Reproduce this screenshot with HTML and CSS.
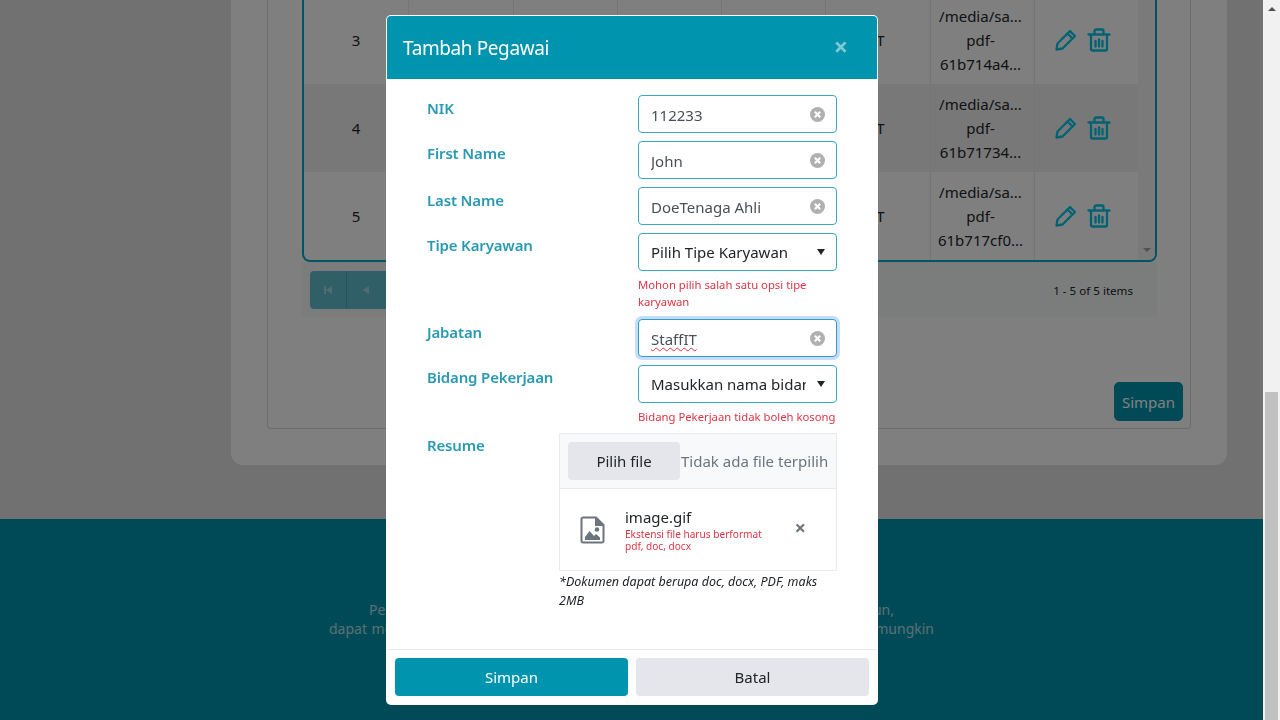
FILE: index.html
```html
<!DOCTYPE html>
<html lang="id">
<head>
<meta charset="utf-8">
<title>Tambah Pegawai</title>
<link rel="stylesheet" href="styles.css">
</head>
<body>
<div class="viewport">
  <main class="page">
    <section class="card">
      <div class="inner">
        <div class="table-box">
          <div class="table">
            <div class="row">
              <div class="cell c-no">3</div><div class="cell"></div><div class="cell"></div><div class="cell"></div><div class="cell"></div><div class="cell">IT</div>
              <div class="cell c-file">/media/sa...<br>pdf-<br>61b714a4...</div>
              <div class="cell c-act">
                <svg class="ic" viewBox="0 0 24 24"><path d="M2.500 21.500 3.500 15.500 16 3l5 5L8.500 20.500Z"/><path d="M13.500 5.500l5 5"/></svg>
                <svg class="ic" viewBox="0 0 24 24"><path d="M1.500 6.500h21M4 6.500V21a1.500 1.500 0 0 0 1.500 1.500h13A1.500 1.500 0 0 0 20 21V6.500M7.500 6.500V3a1.500 1.500 0 0 1 1.500-1.500h6A1.500 1.500 0 0 1 16.500 3v3.500M8.500 13v5.500M12 11.500v7M15.500 13v5.500"/></svg>
              </div>
            </div>
            <div class="row alt">
              <div class="cell c-no">4</div><div class="cell"></div><div class="cell"></div><div class="cell"></div><div class="cell"></div><div class="cell">IT</div>
              <div class="cell c-file">/media/sa...<br>pdf-<br>61b71734...</div>
              <div class="cell c-act">
                <svg class="ic" viewBox="0 0 24 24"><path d="M2.500 21.500 3.500 15.500 16 3l5 5L8.500 20.500Z"/><path d="M13.500 5.500l5 5"/></svg>
                <svg class="ic" viewBox="0 0 24 24"><path d="M1.500 6.500h21M4 6.500V21a1.500 1.500 0 0 0 1.500 1.500h13A1.500 1.500 0 0 0 20 21V6.500M7.500 6.500V3a1.500 1.500 0 0 1 1.500-1.500h6A1.500 1.500 0 0 1 16.500 3v3.500M8.500 13v5.500M12 11.500v7M15.500 13v5.500"/></svg>
              </div>
            </div>
            <div class="row">
              <div class="cell c-no">5</div><div class="cell"></div><div class="cell"></div><div class="cell"></div><div class="cell"></div><div class="cell">IT</div>
              <div class="cell c-file">/media/sa...<br>pdf-<br>61b717cf0...</div>
              <div class="cell c-act">
                <svg class="ic" viewBox="0 0 24 24"><path d="M2.500 21.500 3.500 15.500 16 3l5 5L8.500 20.500Z"/><path d="M13.500 5.500l5 5"/></svg>
                <svg class="ic" viewBox="0 0 24 24"><path d="M1.500 6.500h21M4 6.500V21a1.500 1.500 0 0 0 1.500 1.500h13A1.500 1.500 0 0 0 20 21V6.500M7.500 6.500V3a1.500 1.500 0 0 1 1.500-1.500h6A1.500 1.500 0 0 1 16.500 3v3.500M8.500 13v5.500M12 11.500v7M15.500 13v5.500"/></svg>
              </div>
            </div>
          </div>
          <div class="table-scroll"><span class="arrow-down"></span></div>
        </div>
        <div class="pager">
          <div class="pager-btns">
            <button class="pg-btn first" type="button"><svg class="pg-ic" viewBox="0 0 10 10"><path d="M1 1h2v8H1zM9 1v8L3 5z"/></svg></button>
            <button class="pg-btn" type="button"><svg class="pg-ic" viewBox="0 0 10 10"><path d="M8 1v8L2 5z"/></svg></button>
          </div>
          <span class="pager-info">1 - 5 of 5 items</span>
        </div>
        <div class="save-row"><button class="save" type="button">Simpan</button></div>
      </div>
    </section>
    <footer class="site-footer">
      <p class="foot-line l1">Perusahaan kami membuka lowongan bagi para kandidat terbaik setiap tahun,</p>
      <p class="foot-line l2">dapat mengirim dokumen lamaran dan riwayat hidup anda kepada kami secepat mungkin</p>
    </footer>
    <div class="backdrop"></div>
  </main>
  <aside class="scrollbar"><span class="arrow-up"></span><span class="thumb"></span></aside>
</div>

<div class="modal">
  <header class="modal-head">
    <h1 class="modal-title">Tambah Pegawai</h1>
    <span class="close">&times;</span>
  </header>
  <form class="modal-body">
    <div class="frow">
      <label class="flabel">NIK</label>
      <div class="field"><input class="finput" value="112233">
        <svg class="clear" viewBox="0 0 14 14"><circle cx="7" cy="7" r="7"/><path d="M4.500 4.500l5 5M9.500 4.500l-5 5"/></svg></div>
    </div>
    <div class="frow">
      <label class="flabel up">First Name</label>
      <div class="field"><input class="finput" value="John">
        <svg class="clear" viewBox="0 0 14 14"><circle cx="7" cy="7" r="7"/><path d="M4.500 4.500l5 5M9.500 4.500l-5 5"/></svg></div>
    </div>
    <div class="frow">
      <label class="flabel">Last Name</label>
      <div class="field"><input class="finput" value="DoeTenaga Ahli">
        <svg class="clear" viewBox="0 0 14 14"><circle cx="7" cy="7" r="7"/><path d="M4.500 4.500l5 5M9.500 4.500l-5 5"/></svg></div>
    </div>
    <div class="frow">
      <label class="flabel up">Tipe Karyawan</label>
      <div>
        <div class="field"><select class="fselect"><option>Pilih Tipe Karyawan</option></select><span class="caret"></span></div>
        <p class="err e-two">Mohon pilih salah satu opsi tipe karyawan</p>
      </div>
    </div>
    <div class="frow">
      <label class="flabel">Jabatan</label>
      <div class="field focus"><div class="spell" role="textbox" contenteditable="true" spellcheck="false">StaffIT</div>
        <svg class="clear" viewBox="0 0 14 14"><circle cx="7" cy="7" r="7"/><path d="M4.500 4.500l5 5M9.500 4.500l-5 5"/></svg></div>
    </div>
    <div class="frow">
      <label class="flabel up">Bidang Pekerjaan</label>
      <div>
        <div class="field"><select class="fselect"><option>Masukkan nama bidang pekerjaan</option></select><span class="caret"></span></div>
        <p class="err e-one">Bidang Pekerjaan tidak boleh kosong</p>
      </div>
    </div>
    <div class="frow wide">
      <label class="flabel up">Resume</label>
      <div>
        <div class="upload">
          <div class="up-head">
            <button class="pick" type="button">Pilih file</button>
            <span class="nofile">Tidak ada file terpilih</span>
          </div>
          <div class="up-item">
            <svg class="file-ic" viewBox="0 0 25 28"><path class="fo" d="M1.500 3a1.500 1.500 0 0 1 1.500-1.500h13l7.500 7.500v16a1.500 1.500 0 0 1-1.500 1.500H3A1.500 1.500 0 0 1 1.500 25Z"/><path class="ff" d="M15 1.500h1.500L23.500 9v1H15Z"/><circle class="ff" cx="17" cy="13.500" r="2.300"/><path class="ff" d="M5 24v-3l4.500-6 4.500 5 2-2 4 3.500V24Z"/></svg>
            <div class="up-text">
              <div class="up-name">image.gif</div>
              <div class="up-err">Ekstensi file harus berformat<br>pdf, doc, docx</div>
            </div>
            <span class="up-x">&times;</span>
          </div>
        </div>
        <p class="note">*Dokumen dapat berupa doc, docx, PDF, maks 2MB</p>
      </div>
    </div>
  </form>
  <footer class="modal-foot">
    <button class="mbtn primary" type="button">Simpan</button>
    <button class="mbtn muted" type="button">Batal</button>
  </footer>
</div>
</body>
</html>
```
FILE: styles.css
```css
* { box-sizing: border-box; }
html, body { margin: 0; padding: 0; height: 100%; overflow: hidden; }
body { font-family: "Noto Sans", "Open Sans", sans-serif; color: #212529; background: #e2e2e2; }

.viewport { display: flex; width: 1280px; height: 720px; }
.page { position: relative; width: 1263px; height: 720px; overflow: hidden; background: #e2e2e2; display: flex; flex-direction: column; }
.backdrop { position: absolute; inset: 0; background: rgba(0, 0, 0, .5); }

.scrollbar { width: 17px; background: #f1f1f1; display: flex; flex-direction: column; align-items: center; padding-top: 7px; }
.arrow-up { width: 0; height: 0; border: 4px solid transparent; border-top: 0; border-bottom: 4px solid #505050; }
.thumb { width: 13px; height: 328px; margin-top: 381px; background: #c1c1c1; }

.card { width: 996px; height: 469px; margin: -4px 0 54px 231px; padding: 0 36px 36px; background: #fff; border-radius: 0 0 12px 12px; flex: none; }
.inner { height: 433px; border: 1px solid #d8d8d8; border-top: 0; border-radius: 0 0 4px 4px; padding: 0 7px 7px 34px; display: flex; flex-direction: column; }

.table-box { width: 855px; height: 266px; border: 2px solid #00a9c6; border-top: 0; border-radius: 0 0 8px 8px; display: flex; flex: none; overflow: hidden; }
.table { width: 834px; flex: none; }
.row { display: grid; grid-template-columns: 105px 105px 104px 104px 104px 105px 104px 103px; height: 88px; }
.row.alt { background: #f1f1f1; }
.cell { border-right: 1px solid #ebebeb; display: flex; align-items: center; justify-content: center; text-align: center; font-size: 15px; line-height: 24px; }
.c-file { padding-right: 4px; }
.c-act { border-right: 0; gap: 9px; padding-right: 9px; }
.ic { width: 24px; height: 24px; fill: none; stroke: #00c6e6; stroke-width: 2.300; stroke-linejoin: round; stroke-linecap: round; }
.table-scroll { flex: 1; background: #f4f4f4; display: flex; align-items: flex-end; justify-content: center; padding-bottom: 8px; }
.arrow-down { width: 0; height: 0; border: 4px solid transparent; border-bottom: 0; border-top: 4px solid #a3a3a3; }

.pager { width: 855px; height: 55px; flex: none; background: #f7fafa; padding: 9px 24px 8px 8px; display: flex; align-items: center; justify-content: space-between; }
.pager-btns { display: flex; }
.pg-btn { width: 39px; height: 38px; padding: 0 2px 0 0; border: 0; background: #63bfd0; display: flex; align-items: center; justify-content: center; }
.pg-btn.first { width: 37px; padding: 0; border-right: 1px solid #4aa8ba; border-radius: 4px 0 0 4px; }
.pg-ic { width: 10px; height: 10px; fill: #a5d8e2; }
.pager-info { font-size: 11.600px; padding-top: 1px; }

.save-row { flex: 1; display: flex; justify-content: flex-end; align-items: flex-end; }
.save { width: 69px; height: 39px; padding: 0; border: 1px solid #0094ae; border-radius: 5px; background: #0094ae; color: #fff; font: 15px "Noto Sans", sans-serif; }

.site-footer { flex: 1; background: #0094ae; color: #fff; padding-top: 81px; display: flex; flex-direction: column; align-items: center; }
.foot-line { margin: 0; font-size: 14px; line-height: 19px; text-align: justify; text-align-last: justify; white-space: nowrap; opacity: .7; }
.foot-line.l1 { width: 525px; }
.foot-line.l2 { width: 605px; }

.modal { position: fixed; left: 386px; top: 15px; width: 492px; height: 690px; background: #fff; border: 1px solid rgba(255, 255, 255, .7); border-radius: 5px; display: flex; flex-direction: column; overflow: hidden; }
.modal-head { height: 63px; flex: none; background: #0094ae; padding: 2px 29px 0 16px; display: flex; align-items: center; justify-content: space-between; }
.modal-title { margin: 0; font-size: 19px; line-height: 1.5; font-weight: 400; letter-spacing: -.4px; color: #fff; }
.close { font-size: 25px; line-height: 1; font-weight: 700; color: #7fc9d6; margin-bottom: 5px; }

.modal-body { flex: 1; padding: 16px 40px 0; display: flex; flex-direction: column; gap: 8px; }
.frow { display: grid; grid-template-columns: 211px 199px; }
.frow.wide { grid-template-columns: 132px 278px; }
.flabel { font-size: 15px; line-height: 22px; font-weight: 600; letter-spacing: -.15px; color: #2a9ab2; padding-top: 2px; }
.flabel.up { padding-top: 1px; }

.field { height: 38px; border: 1px solid #38a9c1; border-radius: 4px; padding: 0 11px 0 12px; display: flex; align-items: center; background: #fff; }
.field.focus { border-color: #2f9fbb; box-shadow: 0 0 0 3px #c5dcff; }
.finput { flex: 1; min-width: 0; height: 32px; border: 0; outline: 0; padding: 2px 0 0; background: transparent; color: #495057; font: 15px/28px "Noto Sans", sans-serif; }
.spell { flex: 1; min-width: 0; padding-top: 2px; outline: 0; color: #495057; font-size: 15px; line-height: 22px; text-decoration: underline wavy #e0323c 1px; text-underline-offset: 2px; }
.clear { width: 15px; height: 15px; flex: none; }
.clear circle { fill: #b0b0b0; }
.clear path { fill: none; stroke: #fff; stroke-width: 2; }
.fselect { flex: 1; min-width: 0; border: 0; outline: 0; padding: 0; background: transparent; appearance: none; color: #212529; font: 15px "Noto Sans", sans-serif; margin-right: 11px; }
.caret { width: 0; height: 0; flex: none; border: 4px solid transparent; border-bottom: 0; border-top: 6px solid #212529; margin-bottom: 1px; }

.err { margin: 0; font-size: 11.300px; line-height: 17px; color: #dc3545; }
.e-two { padding-top: 5px; margin-bottom: 1px; }
.e-one { padding-top: 5px; }

.upload { border: 1px solid #e9ecef; }
.up-head { height: 55px; background: #f8f9fa; border-bottom: 1px solid #e9ecef; padding: 8px 0 8px 8px; display: flex; align-items: center; }
.pick { width: 112px; height: 38px; padding: 0; border: 0; border-radius: 4px; background: #e4e6eb; color: #212529; font: 15px "Noto Sans", sans-serif; }
.nofile { margin-left: 1px; font-size: 15px; color: #6c757d; white-space: nowrap; }
.up-item { height: 81px; padding: 0 30px 0 20px; display: flex; align-items: center; }
.file-ic { width: 25px; height: 28px; flex: none; margin-right: 20px; }
.fo { fill: none; stroke: #6c757d; stroke-width: 2; }
.ff { fill: #6c757d; }
.up-text { flex: 1; }
.up-name { font-size: 15px; line-height: 18px; margin-bottom: 2px; }
.up-err { font-size: 10.100px; line-height: 12px; color: #dc3545; }
.up-x { font-size: 20px; line-height: 1; font-weight: 700; color: #6c757d; margin-bottom: 4px; }
.note { margin: 1px 0 0; font-size: 12.500px; line-height: 19px; font-style: italic; color: #212529; }

.modal-foot { height: 55px; flex: none; border-top: 1px solid #e9ecef; padding: 8px; display: flex; gap: 8px; }
.mbtn { flex: 1; height: 38px; padding: 0; border: 0; border-radius: 4px; font: 15px "Noto Sans", sans-serif; }
.primary { background: #0094ae; color: #fff; }
.muted { background: #e4e6eb; color: #212529; }
```
